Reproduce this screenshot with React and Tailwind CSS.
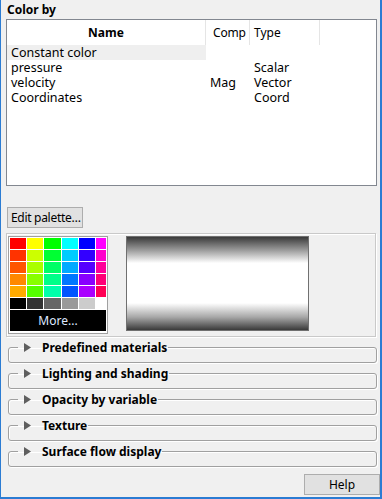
import React from "react";

const rows = [
  ["#ff0000", "#ffff00", "#00ff00", "#00ffff", "#0000ff", "#ff00ff"],
  ["#ff3300", "#ccff00", "#00ff33", "#00ccff", "#3300ff", "#ff00cc"],
  ["#ff5500", "#aaff00", "#00ff66", "#00aaff", "#5500ff", "#ff0099"],
  ["#ff8800", "#88ff00", "#00ff88", "#0077ff", "#8800ff", "#ff0077"],
  ["#ffaa00", "#55ff00", "#00ffaa", "#0055ff", "#aa00ff", "#ff0055"],
  ["#000000", "#333333", "#666666", "#999999", "#cccccc", "#ffffff"],
];

const sections = [
  "Predefined materials",
  "Lighting and shading",
  "Opacity by variable",
  "Texture",
  "Surface flow display",
];

function Section({ title }) {
  return (
    <fieldset className="ml-[7px] w-[369px] h-[22px] border border-[#a0a0a0] rounded-[3px] shadow-[inset_1px_1px_0_#ffffff,1px_1px_0_#ffffff] px-[9px]">
      <legend className="px-[1px] h-[13px]">
        <div className="flex items-center h-[13px]">
          <svg width="7" height="9" viewBox="0 0 7 9" className="ml-[5px] mr-[11px]">
            <polygon points="0,0 7,4.5 0,9" fill="#5f5f5f" />
          </svg>
          <span className="font-bold text-[12px] leading-[13px] text-black whitespace-nowrap">{title}</span>
        </div>
      </legend>
    </fieldset>
  );
}

export default function App() {
  return (
    <div
      className="w-[382px] h-[499px] bg-[#f0f0f0] border-l border-r-2 border-b-2 border-[#2b7cd3] flex flex-col text-black overflow-hidden"
      style={{ fontFamily: '"Noto Sans", "Open Sans", sans-serif' }}
    >
      <div className="h-[19px] pl-[6px] pt-[2px] text-[12px] font-bold leading-[15px]">Color by</div>

      <div className="ml-[5px] w-[371px] h-[167px] border border-[#828790] bg-white flex flex-col">
        <div className="flex h-[25px] text-[12px] items-center">
          <div className="w-[199px] h-full flex items-center justify-center font-bold border-r border-[#e5e5e5]">Name</div>
          <div className="w-[44px] h-full flex items-center pl-[7px] border-r border-[#e5e5e5] tracking-[-0.2px]">Comp</div>
          <div className="w-[70px] h-full flex items-center pl-[4px] border-r border-[#e5e5e5]">Type</div>
        </div>
        <div className="flex flex-col text-[12.5px] leading-[15px]">
          <div className="flex h-[15px]">
            <div className="w-[199px] bg-[#efefef] pl-[4px] whitespace-nowrap">Constant color</div>
            <div className="w-[44px]"></div>
            <div className="w-[70px]"></div>
          </div>
          <div className="flex h-[15px]">
            <div className="w-[199px] pl-[4px]">pressure</div>
            <div className="w-[44px] pl-[4px]"></div>
            <div className="w-[70px] pl-[4px]">Scalar</div>
          </div>
          <div className="flex h-[15px]">
            <div className="w-[199px] pl-[4px]">velocity</div>
            <div className="w-[44px] pl-[4px]">Mag</div>
            <div className="w-[70px] pl-[4px]">Vector</div>
          </div>
          <div className="flex h-[15px]">
            <div className="w-[199px] pl-[4px]">Coordinates</div>
            <div className="w-[44px] pl-[4px]"></div>
            <div className="w-[70px] pl-[4px]">Coord</div>
          </div>
        </div>
      </div>

      <div className="mt-[21px] ml-[6px] w-[76px] h-[21px] border border-[#adadad] bg-[#e1e1e1] text-[12px] leading-[19px] pl-[3px] whitespace-nowrap tracking-[-0.3px]">
        Edit palette…
      </div>

      <div className="mt-[5px] ml-[5px] w-[370px] h-[104px] border border-[#c9c9c9] shadow-[inset_1px_1px_0_#ffffff,1px_1px_0_#ffffff] flex items-start pl-[1px] pt-[2px]">
        <div className="w-[100px] h-[98px] border border-[#a0a0a0] bg-white p-[1px] flex flex-col">
          <div className="grid grid-cols-[16px_16px_17px_16px_16px_1fr] gap-[1px]">
            {rows.flat().map((c, i) => (
              <div key={i} className="h-[11px]" style={{ backgroundColor: c }} />
            ))}
          </div>
          <div className="mt-[1px] h-[21px] bg-black text-[#dfe8ff] text-[12px] flex items-center justify-center">More...</div>
        </div>
        <div
          className="ml-[18px] w-[183px] h-[95px] border border-[#707070]"
          style={{
            background:
              "linear-gradient(to bottom, #3a3a3a 0%, #9a9a9a 14%, #ffffff 28%, #ffffff 71%, #a8a8a8 86%, #3a3a3a 100%)",
          }}
        />
      </div>

      <div className="mt-[4px] flex flex-col gap-[4px]">
        {sections.map((s) => (
          <Section key={s} title={s} />
        ))}
      </div>

      <div className="mt-auto mb-[2px] self-end w-[76px] h-[21px] border border-[#adadad] bg-[#e1e1e1] text-[12px] flex items-center justify-center">
        Help
      </div>
    </div>
  );
}
